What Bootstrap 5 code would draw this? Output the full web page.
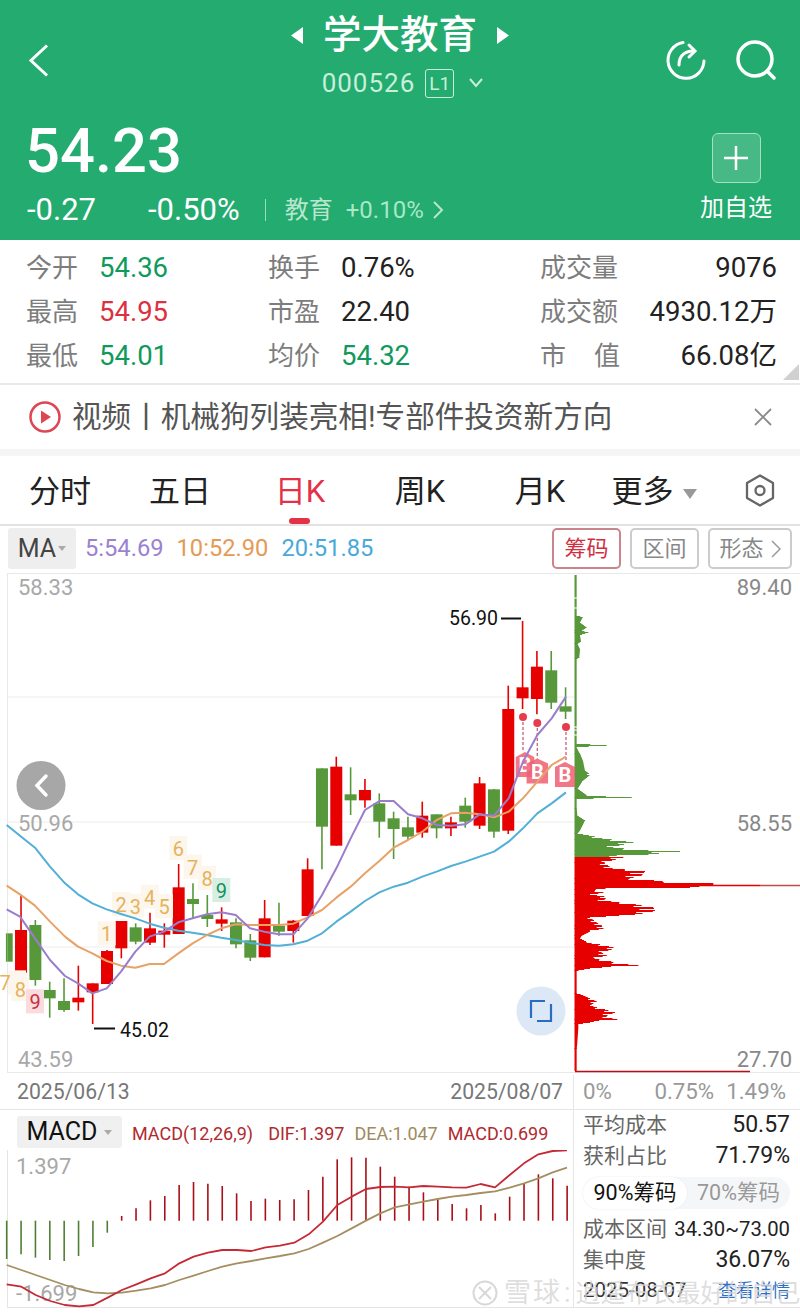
<!DOCTYPE html>
<html lang="zh">
  <head>
    <meta charset="UTF-8" />
    <meta name="viewport" content="width=device-width, initial-scale=1" />
    <title>学大教育</title>
    <link
      href="https://cdn.jsdelivr.net/npm/bootstrap@5.3.0/dist/css/bootstrap.min.css"
      rel="stylesheet"
    />
    <script src="https://cdn.jsdelivr.net/npm/bootstrap@5.3.0/dist/js/bootstrap.bundle.min.js"></script>
    <style>
      body {
        width: 800px;
        height: 1316px;
        overflow: hidden;
        background: #fff;
        font-family: Roboto, "Noto Sans CJK SC", sans-serif;
        color: #222;
      }
      svg { display: block; }
      /* cabecera verde */
      .stock-head {
        height: 240px;
        background: #23ab70;
        color: #fff;
        padding: 0 27px;
      }
      .head-top {
        display: grid;
        grid-template-columns: 1fr auto 1fr;
        height: 118px;
      }
      .back-cell { padding-top: 44px; margin-left: 1px; }
      .tool-cell { gap: 30px; padding-top: 40px; margin-right: -3px; }
      .stock-title {
        font-size: 38.500px;
        line-height: 40px;
        padding-top: 15px;
        font-weight: 500;
        gap: 20px;
      }
      .stock-code {
        font-size: 26px;
        line-height: 30px;
        margin-top: 13px;
        margin-left: 6px;
        color: #c9eeda;
        letter-spacing: 1px;
        gap: 10px;
      }
      .level-tag {
        font-size: 19px;
        line-height: 27px;
        width: 29px;
        height: 29px;
        border: 1px solid #c9eeda;
        border-radius: 3px;
        text-align: center;
        letter-spacing: 0;
      }
      .code-arrow { margin-left: 4px; }
      .stock-price {
        font-size: 61.500px;
        line-height: 62px;
        font-weight: 500;
        margin-top: 2px;
        margin-left: -2px;
      }
      .price-sub {
        font-size: 31px;
        line-height: 34px;
        margin-top: 11px;
      }
      .sub-gap { width: 121px; }
      .sub-line { width: 1px; height: 22px; background: #9bdcba; margin: 0 19px 0 25px; }
      .sector-text { color: #b9e6cd; font-size: 24px; }
      .sector-pct { color: #a8e8c5; margin-left: 13px; }
      .sub-arrow { margin-left: 8px; }
      .add-col { width: 76px; margin-right: -1px; }
      .add-btn {
        width: 49px;
        height: 50px;
        background: #47b986;
        border: 1px solid #a6e0c2;
        border-radius: 6px;
        margin: 15px auto 0;
      }
      .add-label { font-size: 24px; line-height: 30px; margin-top: 10px; }
      /* tabla de datos */
      .quote-grid {
        position: relative;
        display: grid;
        grid-template-columns: 73px 169px 73px 199px 80px 1fr;
        grid-auto-rows: 44px;
        align-items: center;
        height: 145px;
        padding: 6px 23px 0 26px;
        border-bottom: 2px solid #e9e9e9;
        font-size: 27.500px;
      }
      .quote-label { color: #7d7d7d; font-size: 26px; }
      .up-red { color: #dd3042; }
      .down-green { color: #0f9a5c; }
      .corner-mark {
        position: absolute;
        right: 1px;
        bottom: 3px;
        width: 0;
        height: 0;
        border-left: 16px solid transparent;
        border-bottom: 16px solid #d0d0d0;
      }
      /* noticia */
      .news-bar {
        height: 71px;
        padding: 5px 28px 5px 29px;
        font-size: 29.600px;
        color: #555;
        border-bottom: 7px solid #f5f5f5;
        gap: 11px;
      }
      /* pestañas */
      .period-tabs {
        display: grid;
        grid-template-columns: repeat(6, 120px) 80px;
        height: 70px;
        border-bottom: 2px solid #e2e2e2;
        font-size: 31px;
        align-items: center;
        text-align: center;
      }
      .period-tab { position: relative; line-height: 72px; height: 68px; color: #222; }
      .period-tab.is-active { color: #e33148; }
      .period-tab.is-active::after {
        content: "";
        position: absolute;
        left: 49px;
        bottom: 0;
        width: 21px;
        height: 6px;
        border-radius: 3px;
        background: #e33148;
      }
      .more-tab { padding-right: 12px; white-space: nowrap; }
      .more-arrow {
        display: inline-block;
        width: 0;
        height: 0;
        margin-left: 9px;
        vertical-align: 3px;
        border-left: 7px solid transparent;
        border-right: 7px solid transparent;
        border-top: 10px solid #999;
      }
      /* fila MA */
      .ma-row {
        height: 47px;
        padding: 0 8px 2px 8px;
        font-size: 23.700px;
      }
      .ma-select {
        width: 68px;
        height: 41px;
        background: #eee;
        border-radius: 3px;
        font-size: 25px;
        color: #444;
        gap: 2px;
      }
      .small-arrow {
        display: inline-block;
        width: 0;
        height: 0;
        border-left: 4px solid transparent;
        border-right: 4px solid transparent;
        border-top: 5px solid #aaa;
      }
      .ma-values { padding-left: 9px; gap: 13px; }
      .ma-5 { color: #9b82cf; }
      .ma-10 { color: #e59a55; }
      .ma-20 { color: #49a9d9; }
      .chip-btn {
        width: 69px;
        height: 41px;
        border: 2px solid #ccc;
        border-radius: 5px;
        color: #888;
        font-size: 22px;
        margin-left: 9px;
        background: #fff;
        justify-content: center;
      }
      .chip-btn.is-on { border-color: #c9848c; color: #d02f3f; margin-left: 0; }
      .chip-btn.more-chip { width: 84px; gap: 7px; }
      /* grafico */
      .axis-txt { font-family: Roboto, sans-serif; font-size: 22px; }
      .axis-left { fill: #a8a8a8; }
      .axis-right { fill: #888; text-anchor: end; }
      .price-note { font-family: Roboto, sans-serif; font-size: 19.500px; fill: #111; }
      .td-num { font-family: Roboto, sans-serif; font-size: 20px; text-anchor: middle; }
      .buy-txt { font-family: Roboto, sans-serif; font-size: 20px; font-weight: 700; fill: #fff; text-anchor: middle; }
      /* parte baja */
      .date-row {
        height: 37px;
        padding: 2px 0 0 17px;
        font-size: 21.200px;
        color: #777;
        border-bottom: 1px solid #e6e6e6;
      }
      .date-left { width: 557px; padding-right: 10px; border-right: 1px solid #e6e6e6; height: 34px; }
      .date-pct { flex: 1; padding: 0 14px 0 9px; color: #999; font-size: 22.300px; }
      .date-mid { margin-right: 12px; }
      .low-left { width: 574px; border-right: 1px solid #e6e6e6; }
      .macd-head { height: 40px; padding: 4px 0 0 17px; gap: 10px; }
      .macd-select {
        width: 105px;
        height: 32px;
        background: #f0f0f0;
        border-radius: 3px;
        font-size: 25px;
        color: #111;
        gap: 7px;
      }
      .macd-vals { font-size: 18px; gap: 10px; color: #b02a30; margin-top: 2px; }
      .macd-first { margin-right: 5px; }
      .dea-val { color: #a08a5e; }
      .chip-panel {
        width: 226px;
        height: 198px;
        padding: 0 10px 0 9px;
        border-bottom: 1px solid #e4e4e4;
        white-space: nowrap;
      }
      .chip-line { height: 31px; }
      .chip-line span:first-child { color: #666; font-size: 21px; }
      .chip-line span:last-child { color: #222; font-size: 23px; }
      .chip-line span.cost-range { font-size: 20.300px; }
      .chip-line-last { margin-top: -1px; }
      .chip-line span.chip-date { color: #333; font-size: 20.500px; }
      .chip-line span.see-more { color: #2f6fc4; font-size: 18px; }
      .chip-toggle {
        height: 32px;
        margin: 5px 0 5px;
        background: #f5f6f8;
        border-radius: 16px;
        font-size: 21.500px;
      }
      .chip-toggle div { flex: 1; text-align: center; color: #999; line-height: 32px; }
      .chip-toggle .is-on { flex: 0 0 104px; background: #fff; border-radius: 16px; color: #111; box-shadow: 0 0 2px #e4e6ea; }
      .mark-line {
        position: absolute;
        left: 472px;
        top: 1277px;
        width: 328px;
        height: 32px;
        overflow: hidden;
        font-size: 27px;
        line-height: 32px;
        color: rgba(214, 214, 214, 0.8);
        gap: 6px;
        white-space: nowrap;
      }
      .mark-site { letter-spacing: 2px; }
      .mark-colon { margin: 0 5px 0 2px; }
      .mark-user { font-size: 25px; }
    </style>
  </head>
  <body>
    <header class="stock-head">
      <div class="head-top">
        <div class="back-cell">
          <svg width="24" height="33" viewBox="0 0 24 33" fill="none" stroke="#fff" stroke-width="3"><path d="M19 1.500 3 16.500l16 15" /></svg>
        </div>
        <div class="text-center">
          <div class="stock-title d-flex align-items-center justify-content-center">
            <svg width="14" height="17" viewBox="0 0 14 17"><path d="M14 0v17L2 8.500z" fill="#fff" /></svg>
            <span>学大教育</span>
            <svg width="14" height="17" viewBox="0 0 14 17"><path d="M0 0v17l12-8.500z" fill="#fff" /></svg>
          </div>
          <div class="stock-code d-flex align-items-center justify-content-center">
            <span>000526</span>
            <span class="level-tag">L1</span>
            <svg class="code-arrow" width="16" height="10" viewBox="0 0 16 10" fill="none" stroke="#c9eeda" stroke-width="2"><path d="m2 1 6 7 6-7" /></svg>
          </div>
        </div>
        <div class="tool-cell d-flex justify-content-end">
          <svg width="40" height="40" viewBox="0 0 40 40" fill="none" stroke="#fff" stroke-width="3" stroke-linecap="round">
            <path d="M17 2.500A18 18 0 1 0 38 21" />
            <path d="M13 25c0-8 4-13 13-14" />
            <path d="m23 5 6 6-6 6" />
          </svg>
          <svg width="40" height="40" viewBox="0 0 40 40" fill="none" stroke="#fff" stroke-width="3.500" stroke-linecap="round">
            <circle cx="19" cy="19" r="17" />
            <path d="m31 31 7 7" />
          </svg>
        </div>
      </div>
      <div class="d-flex justify-content-between">
        <div>
          <div class="stock-price">54.23</div>
          <div class="price-sub d-flex align-items-center">
            <span class="sub-gap">-0.27</span>
            <span>-0.50%</span>
            <span class="sub-line"></span>
            <span class="sector-text">教育</span>
            <span class="sector-text sector-pct">+0.10%</span>
            <svg class="sub-arrow" width="12" height="22" viewBox="0 0 12 22" fill="none" stroke="#b9e6cd" stroke-width="2"><path d="m2 3 8 8-8 8" /></svg>
          </div>
        </div>
        <div class="add-col text-center">
          <div class="add-btn d-flex align-items-center justify-content-center">
            <svg width="26" height="26" viewBox="0 0 26 26" stroke="#fff" stroke-width="2.500"><path d="M13 1v24M1 13h24" /></svg>
          </div>
          <div class="add-label">加自选</div>
        </div>
      </div>
    </header>

    <section class="quote-grid">
      <span class="quote-label">今开</span><span class="down-green">54.36</span>
      <span class="quote-label">换手</span><span>0.76%</span>
      <span class="quote-label">成交量</span><span class="text-end">9076</span>
      <span class="quote-label">最高</span><span class="up-red">54.95</span>
      <span class="quote-label">市盈</span><span>22.40</span>
      <span class="quote-label">成交额</span><span class="text-end">4930.12万</span>
      <span class="quote-label">最低</span><span class="down-green">54.01</span>
      <span class="quote-label">均价</span><span class="down-green">54.32</span>
      <span class="quote-label d-flex justify-content-between">市<b class="fw-normal">值</b></span><span class="text-end">66.08亿</span>
      <i class="corner-mark"></i>
    </section>

    <section class="news-bar d-flex align-items-center">
      <svg width="32" height="32" viewBox="0 0 32 32" class="flex-shrink-0">
        <circle cx="16" cy="16" r="14.500" fill="none" stroke="#dd4655" stroke-width="2.500" />
        <path d="M12 9.500v13l10-6.500z" fill="#dd4655" />
      </svg>
      <span class="flex-grow-1 text-nowrap">视频丨机械狗列装亮相!专部件投资新方向</span>
      <svg width="18" height="18" viewBox="0 0 18 18" stroke="#8a8a8a" stroke-width="1.800"><path d="m1 1 16 16M17 1 1 17" /></svg>
    </section>

    <nav class="period-tabs">
      <div class="period-tab">分时</div>
      <div class="period-tab">五日</div>
      <div class="period-tab is-active">日K</div>
      <div class="period-tab">周K</div>
      <div class="period-tab">月K</div>
      <div class="period-tab more-tab">更多<i class="more-arrow"></i></div>
      <div class="d-flex justify-content-center">
        <svg width="30" height="33" viewBox="0 0 30 33" fill="none" stroke="#666" stroke-width="2.300">
          <path d="M15 1.500 28 9v15l-13 7.500L2 24V9z" stroke-linejoin="round" />
          <circle cx="15" cy="16.500" r="4.500" />
        </svg>
      </div>
    </nav>

    <section class="ma-row d-flex align-items-center">
      <div class="ma-select d-flex align-items-center justify-content-center">MA<i class="small-arrow"></i></div>
      <div class="ma-values d-flex flex-grow-1">
        <span class="ma-5">5:54.69</span>
        <span class="ma-10">10:52.90</span>
        <span class="ma-20">20:51.85</span>
      </div>
      <div class="chip-btn is-on d-flex align-items-center">筹码</div>
      <div class="chip-btn d-flex align-items-center">区间</div>
      <div class="chip-btn more-chip d-flex align-items-center">形态
        <svg width="10" height="20" viewBox="0 0 10 20" fill="none" stroke="#999" stroke-width="1.500"><path d="m1 2 8 8-8 8" /></svg>
      </div>
    </section>

    <svg id="kline" width="800" height="500" viewBox="0 573 800 500"></svg>

    <section class="date-row d-flex align-items-center">
      <div class="date-left d-flex align-items-center justify-content-between">
        <span>2025/06/13</span><span>2025/08/07</span>
      </div>
      <div class="date-pct d-flex justify-content-between">
        <span class="me-auto">0%</span><span class="date-mid">0.75%</span><span>1.49%</span>
      </div>
    </section>

    <section class="d-flex">
      <div class="low-left">
        <div class="macd-head d-flex align-items-center">
          <div class="macd-select d-flex align-items-center justify-content-center">MACD<i class="small-arrow"></i></div>
          <div class="macd-vals d-flex text-nowrap">
            <span class="macd-first">MACD(12,26,9)</span>
            <span>DIF:1.397</span>
            <span class="dea-val">DEA:1.047</span>
            <span>MACD:0.699</span>
          </div>
        </div>
        <svg id="macd" width="574" height="158" viewBox="0 1150 574 158"></svg>
      </div>
      <div class="chip-panel">
        <div class="chip-line d-flex justify-content-between align-items-center"><span>平均成本</span><span>50.57</span></div>
        <div class="chip-line d-flex justify-content-between align-items-center"><span>获利占比</span><span>71.79%</span></div>
        <div class="chip-toggle d-flex">
          <div class="is-on">90%筹码</div>
          <div>70%筹码</div>
        </div>
        <div class="chip-line d-flex justify-content-between align-items-center"><span>成本区间</span><span class="cost-range">34.30~73.00</span></div>
        <div class="chip-line d-flex justify-content-between align-items-center"><span>集中度</span><span>36.07%</span></div>
        <div class="chip-line chip-line-last d-flex justify-content-between align-items-center"><span class="chip-date">2025-08-07</span><span class="see-more">查看详情</span></div>
      </div>
    </section>

    <div class="mark-line d-flex align-items-center">
      <svg width="26" height="26" viewBox="0 0 26 26" fill="none" stroke="#d8d8d8" stroke-width="2" class="flex-shrink-0">
        <circle cx="13" cy="13" r="11.500" />
        <path d="m7 7 12 12M19 7 7 19" />
      </svg>
      <span><span class="mark-site">雪球</span><span class="mark-colon">:</span><span class="mark-user">逍遥布衣最好的自己</span></span>
    </div>

    <script>
      const SVG_NS = "http://www.w3.org/2000/svg";
      const RED = "#e60000";
      const GREEN = "#56983a";

      function add(parent, tag, attrs, text) {
        const el = document.createElementNS(SVG_NS, tag);
        for (const k in attrs) el.setAttribute(k, attrs[k]);
        if (text) el.textContent = text;
        parent.appendChild(el);
        return el;
      }
      // las coordenadas van medidas sobre el recorte (x3)
      const zy = (y) => 575 + y / 3;
      const cx = (i) => 6.7 + 14.33 * i;

      function drawKline() {
        const s = document.getElementById("kline");
        add(s, "path", { d: "M7 573.500H800M7 1072.500H800M7.500 573V1073", stroke: "#e8e8e8", fill: "none" });
        [697, 822, 947].forEach((y) =>
          add(s, "line", { x1: 7, x2: 575, y1: y, y2: y, stroke: "#ececec" })
        );

        // volumen por precio: [y, ancho]
        const greenProfile = [[0,20],[120,20],[125,38],[140,30],[155,50],[165,35],[172,55],[180,30],[197,33],[205,22],[222,30],[245,28],[250,20],[505,20],[510,110],[515,20],[535,30],[560,40],[585,45],[598,62],[620,35],[640,22],[660,50],[667,185],[672,20],[700,20],[720,22],[735,45],[765,30],[775,22],[785,80],[793,125],[802,190],[815,130],[825,235],[828,330],[838,225],[845,100]];
        const redProfile = [[846,160],[862,100],[880,128],[888,225],[900,215],[910,175],[918,278],[925,430],[930,430],[935,360],[938,130],[942,60],[950,100],[958,60],[965,110],[975,100],[985,180],[997,250],[1005,255],[1012,240],[1020,180],[1025,60],[1040,80],[1050,95],[1060,100],[1070,55],[1080,35],[1090,30],[1100,50],[1108,90],[1118,135],[1130,95],[1140,110],[1150,70],[1160,130],[1170,205],[1178,60],[1185,20],[1255,20],[1260,40],[1278,80],[1290,60],[1303,105],[1312,135],[1322,110],[1333,142],[1340,60],[1345,25],[1360,25],[1400,22],[1420,20],[1489,20]];
        const row = (prof, color) => {
          for (let p = 0; p < prof.length - 1; p++) {
            const [y0, w0] = prof[p], [y1, w1] = prof[p + 1];
            for (let zz = y0; zz < y1; zz += 3) {
              const t = (zz - y0) / (y1 - y0);
              let w = w0 + (w1 - w0) * t;
              if (w > 60 && Math.round(zz / 3) % 3 == 1) w *= 0.82;
              const y = Math.round(zy(zz)) + 0.5;
              add(s, "line", { x1: 574.5, x2: Math.min(800, 570 + w / 3), y1: y, y2: y, stroke: color });
            }
          }
        };
        row(greenProfile, GREEN);
        row(redProfile, RED);
        add(s, "line", { x1: 575, x2: 750, y1: 1071.500, y2: 1071.500, stroke: "#b51018", "stroke-width": 1.500 });
        add(s, "line", { x1: 575, x2: 760, y1: 885.500, y2: 885.500, stroke: RED, "stroke-width": 1.500 });
        add(s, "line", { x1: 760, x2: 800, y1: 885.500, y2: 885.500, stroke: "#c04a4a", "stroke-width": 1.500 });
        [598, 608, 727, 730, 735].forEach((y) => add(s, "line", { x1: 574, x2: 578, y1: y, y2: y, stroke: "#fff" }));

        // velas: color, alto, cuerpo arriba, cuerpo abajo, bajo
        const candles = [
          ["g",1075,1075,1160,1160],["r",960,1065,1193,1193],["g",1035,1050,1215,1232],["g",1220,1245,1270,1328],["g",1210,1278,1305,1310],
          ["r",1172,1268,1282,1307],["r",1225,1225,1252,1347],["r",1125,1128,1227,1227],["r",1038,1038,1120,1150],["g",1045,1057,1100,1108],
          ["r",1013,1060,1103,1110],["r",1045,1067,1079,1118],["r",867,937,1077,1077],["g",925,972,987,1030],["g",960,1020,1032,1056],
          ["r",997,1033,1046,1068],["g",1030,1042,1108,1120],["g",1077,1096,1148,1158],["r",975,1030,1147,1147],["g",983,1052,1070,1082],
          ["r",1035,1037,1068,1103],["r",850,883,1023,1023],["g",580,580,755,883],["r",545,575,812,812],["g",577,658,676,720],
          ["r",612,645,676,698],["g",655,685,740,788],["g",710,730,762,852],["g",725,757,785,795],["r",680,722,773,788],
          ["g",718,718,760,790],["r",725,742,760,783],["g",668,692,740,758],["r",606,625,752,762],["g",642,643,770,788],
          ["r",332,402,767,777],["r",138,337,370,402],["r",228,275,372,418],["g",228,286,383,402],["g",337,394,410,432],
        ];
        candles.forEach((c, i) => {
          const color = c[0] == "r" ? RED : GREEN;
          const x = cx(i);
          add(s, "line", { x1: x, x2: x, y1: zy(c[1]), y2: zy(c[4]), stroke: color, "stroke-width": 1.6 });
          const left = Math.max(7.500, x - 6);
          add(s, "rect", { x: left, y: zy(c[2]), width: x + 6 - left, height: zy(c[3]) - zy(c[2]), fill: color });
        });

        // marcas de secuencia
        const tdNums = [
          [5,1225,"7","#e5b25d","#fdf6ec"],[20.300,1245,"8","#e5b25d","#fdf6ec"],[35,1282,"9","#c8323e","#fadcdf"],
          [106.700,1078,"1","#e5b25d","#fdf6ec"],[121,990,"2","#e5b25d","#fdf6ec"],[135.300,995,"3","#e5b25d","#fdf6ec"],
          [149.700,968,"4","#e5b25d","#fdf6ec"],[164,997,"5","#e5b25d","#fdf6ec"],[178.300,822,"6","#e5b25d","#fdf6ec"],
          [192.700,878,"7","#e5b25d","#fdf6ec"],[207,912,"8","#e5b25d","#fdf6ec"],[221.300,948,"9","#12935f","#d7efe3"],
        ];
        tdNums.forEach((n) => {
          add(s, "rect", { x: Math.max(8, n[0] - 9), y: zy(n[1]) - 13, width: 18, height: 24, fill: n[4] });
          add(s, "text", { class: "td-num", x: n[0], y: zy(n[1]) + 7, fill: n[3] }, n[2]);
        });

        // marcas de compra
        [[523,717,525,752,18.500],[537.300,723,537.300,758.500,21.500],[566,727,565,762,20]].forEach((b) => {
          add(s, "line", { x1: b[0], x2: b[0], y1: b[1], y2: b[3], stroke: "#c9626e", "stroke-dasharray": "3 2", "stroke-width": 1.300 });
          const w = b[4];
          add(s, "path", { d: `M${b[2] - w / 2} ${b[3] + 5}l${w / 2} -5l${w / 2} 5v20h${-w}z`, fill: "#ee5f72", opacity: 0.85 });
          add(s, "text", { class: "buy-txt", x: b[2], y: b[3] + 20 }, "B");
          add(s, "circle", { cx: b[0], cy: b[1], r: 4, fill: "#e73c4d" });
        });

        // medias moviles
        const ma5 = [[20,1003],[60,1025],[105,1090],[150,1155],[195,1203],[234,1225],[277,1255],[320,1240],[363,1190],[406,1130],[449,1085],[492,1070],[535,1042],[578,1030],[621,1018],[664,1012],[707,1020],[750,1060],[793,1070],[837,1078],[880,1078],[923,1030],[966,960],[1009,880],[1052,790],[1095,705],[1138,678],[1181,678],[1224,718],[1267,730],[1310,750],[1353,752],[1396,748],[1439,718],[1482,722],[1526,670],[1569,560],[1612,480],[1655,430],[1698,365]];
        const ma10 = [[20,932],[60,958],[105,992],[150,1040],[195,1085],[234,1115],[277,1135],[320,1158],[363,1172],[406,1178],[449,1167],[492,1167],[535,1135],[578,1105],[621,1080],[664,1060],[707,1048],[750,1050],[793,1050],[837,1050],[880,1046],[923,1027],[966,1005],[1009,968],[1052,935],[1095,895],[1138,858],[1181,818],[1224,795],[1267,770],[1310,735],[1353,715],[1396,713],[1439,718],[1482,727],[1526,710],[1569,670],[1612,620],[1655,570],[1698,545]];
        const ma20 = [[20,750],[60,782],[105,818],[150,875],[195,925],[234,958],[277,985],[320,1003],[363,1017],[406,1030],[449,1046],[492,1058],[535,1067],[578,1073],[621,1080],[664,1088],[707,1095],[750,1103],[793,1110],[837,1112],[880,1108],[923,1097],[966,1075],[1009,1040],[1052,1010],[1095,978],[1138,952],[1181,935],[1224,923],[1267,905],[1310,890],[1353,873],[1396,860],[1439,845],[1482,830],[1526,800],[1569,760],[1612,715],[1655,685],[1698,652]];
        const maLine = (pts, color) =>
          add(s, "polyline", { points: pts.map((p) => p[0] / 3 + "," + zy(p[1])).join(" "), fill: "none", stroke: color, "stroke-width": 2, "stroke-linejoin": "round" });
        maLine(ma20, "#52afd6");
        maLine(ma10, "#e8a268");
        maLine(ma5, "#9a7dcb");

        // textos del eje
        [[18,595,"58.33"],[18,830.500,"50.96"],[18,1067,"43.59"]].forEach((t) =>
          add(s, "text", { class: "axis-txt axis-left", x: t[0], y: t[1] }, t[2])
        );
        [[792,595,"89.40"],[792,831,"58.55"],[792,1067,"27.70"]].forEach((t) =>
          add(s, "text", { class: "axis-txt axis-right", x: t[0], y: t[1] }, t[2])
        );
        add(s, "text", { class: "price-note", x: 449, y: 625 }, "56.90");
        add(s, "line", { x1: 501, x2: 521, y1: 618.500, y2: 618.500, stroke: "#111", "stroke-width": 2 });
        add(s, "text", { class: "price-note", x: 120, y: 1037 }, "45.02");
        add(s, "line", { x1: 94, x2: 115, y1: 1028.500, y2: 1028.500, stroke: "#111", "stroke-width": 2 });

        // botones sobre el grafico
        add(s, "circle", { cx: 41, cy: 785.500, r: 24.500, fill: "#a7a7a7" });
        add(s, "path", { d: "M46 776l-9 9.500 9 9.500", fill: "none", stroke: "#fff", "stroke-width": 3.500, "stroke-linecap": "round" });
        add(s, "circle", { cx: 541, cy: 1011, r: 24.500, fill: "#dde8f6" });
        add(s, "path", { d: "M531 1018v-17h14M551 1004v17h-14", fill: "none", stroke: "#2a6bc4", "stroke-width": 2.200 });
      }

      function drawMacd() {
        const s = document.getElementById("macd");
        const my = (y) => 1075 + y / 3;
        add(s, "path", { d: "M7.500 1150V1307.500H574", fill: "none", stroke: "#e4e4e4" });
        const hist = [552,538,548,555,558,543,516,473,423,400,376,363,330,321,326,333,355,378,371,375,373,345,305,253,247,248,275,305,335,352,372,387,400,390,415,365,325,298,310,332];
        hist.forEach((v, i) => {
          const x = 6.700 + 14.370 * i;
          add(s, "line", { x1: x, x2: x, y1: my(437), y2: my(v), stroke: i < 8 ? "#4f7f34" : "#a80f17", "stroke-width": 1.600 });
        });
        const dif = [[20,628],[64,635],[107,660],[151,678],[194,690],[237,694],[280,690],[323,668],[366,645],[409,628],[452,610],[495,595],[538,565],[581,545],[624,533],[667,525],[711,525],[754,528],[797,517],[840,512],[883,503],[926,478],[969,440],[1012,390],[1055,365],[1098,342],[1141,336],[1184,335],[1227,337],[1270,333],[1313,335],[1356,337],[1399,338],[1442,327],[1485,337],[1529,300],[1572,265],[1615,238],[1658,228],[1701,226]];
        const dea = [[20,570],[64,585],[107,600],[151,615],[194,630],[237,642],[280,652],[323,655],[366,653],[409,647],[452,640],[495,630],[538,615],[581,602],[624,588],[667,575],[711,565],[754,558],[797,550],[840,543],[883,535],[926,522],[969,503],[1012,483],[1055,460],[1098,437],[1141,415],[1184,397],[1270,380],[1313,372],[1356,365],[1399,360],[1442,354],[1485,349],[1529,338],[1572,325],[1615,310],[1658,292],[1701,278]];
        add(s, "text", { class: "axis-txt axis-left", x: 16, y: my(272) + 8 }, "1.397");
        add(s, "text", { class: "axis-txt axis-left", x: 16, y: my(655) + 8 }, "-1.699");
        const macdLine = (pts, color) =>
          add(s, "polyline", { points: pts.map((p) => p[0] / 3 + "," + my(p[1])).join(" "), fill: "none", stroke: color, "stroke-width": 1.800, "stroke-linejoin": "round" });
        macdLine(dea, "#a58e60");
        macdLine(dif, "#c42a35");
      }

      drawKline();
      drawMacd();
    </script>
  </body>
</html>
